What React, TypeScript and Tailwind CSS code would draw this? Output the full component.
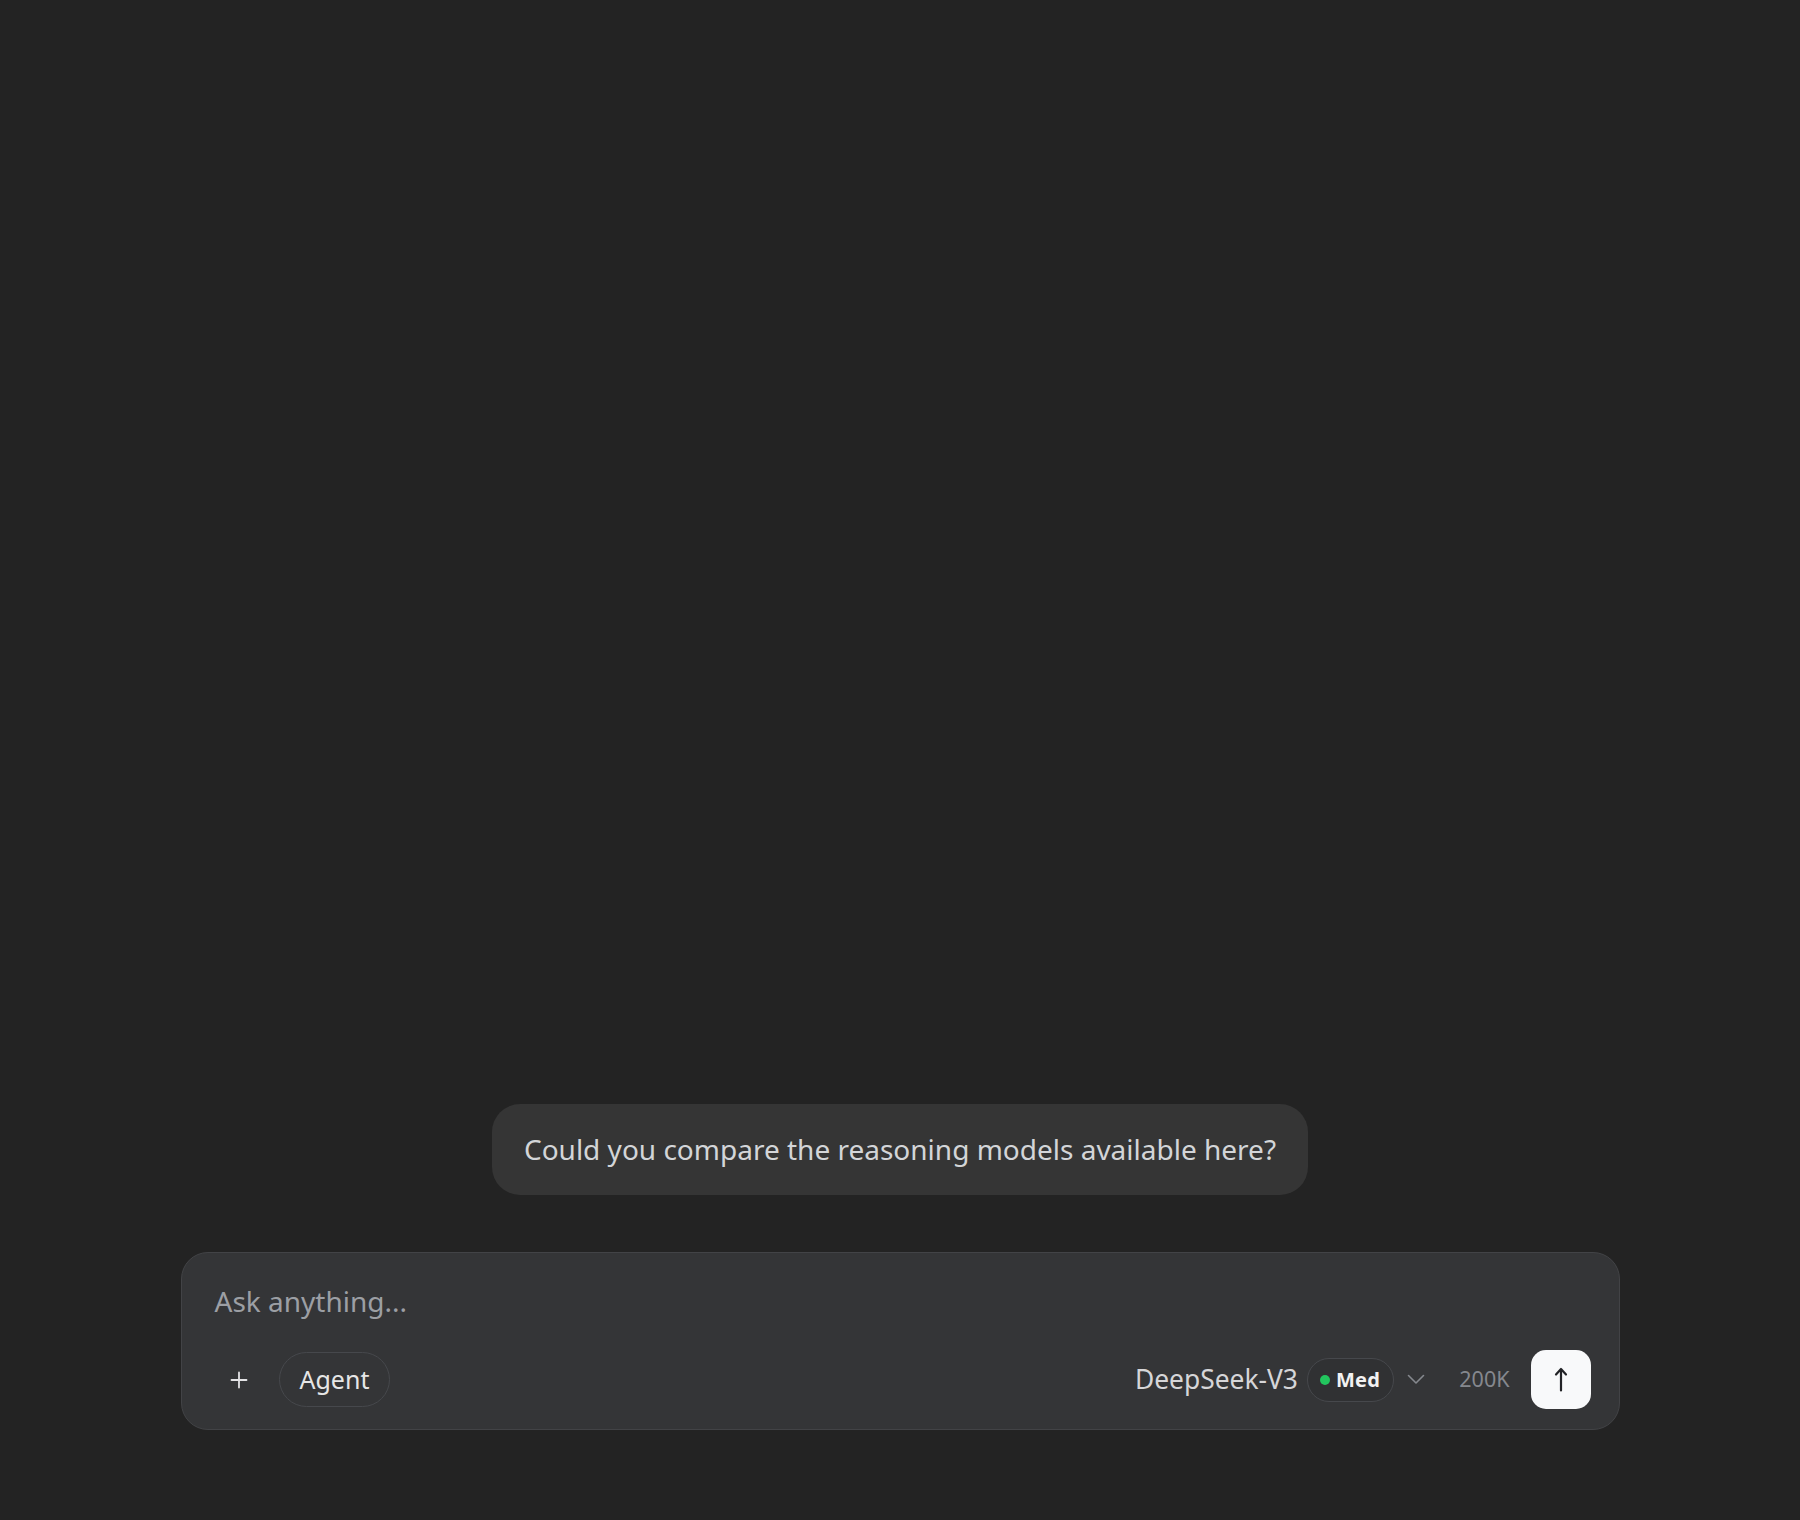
import React from "react";

const font = { fontFamily: '"Noto Sans", "Open Sans", sans-serif' };

const PlusIcon = () => (
  <svg width="18" height="18" viewBox="0 0 18 18" fill="none">
    <path d="M9 1.5v15M1.5 9h15" stroke="#e4e4e6" strokeWidth="1.8" strokeLinecap="round" />
  </svg>
);

const ChevronIcon = () => (
  <svg width="18" height="11" viewBox="0 0 18 11" fill="none">
    <path d="M1.5 1.5 9 9l7.5-7.5" stroke="#85888e" strokeWidth="1.6" strokeLinecap="round" strokeLinejoin="round" />
  </svg>
);

const ArrowUpIcon = () => (
  <svg width="14" height="25" viewBox="0 0 14 25" fill="none">
    <path d="M7 23.5V2M2 7.5 7 2l5 5.5" stroke="#222326" strokeWidth="2.2" strokeLinecap="round" strokeLinejoin="round" />
  </svg>
);

export default function App() {
  return (
    <div className="w-full h-[1520px] bg-[#232323] flex flex-col items-center" style={font}>
      <div className="flex-1" />
      {/* user message */}
      <div className="rounded-[28px] bg-[#353535] px-[32px] py-[26px] text-[28px] leading-[39px] text-[#d3d5d8]">
        Could you compare the reasoning models available here?
      </div>

      {/* composer */}
      <div className="mt-[57px] mb-[90px] w-[1439px] rounded-[27px] border border-[#424346] bg-[#343537] pl-[33px] pr-[28px] pt-[28px] pb-[20px]">
        <div className="text-[28px] leading-[40px] text-[#9c9fa4]">Ask anything...</div>
        <div className="mt-[29px] flex items-center h-[59px]">
          <button className="w-[48px] h-[48px] flex items-center justify-center">
            <PlusIcon />
          </button>
          <div className="ml-[16px] h-[55px] px-[20px] flex items-center rounded-full border border-[#46484c] text-[25px] text-[#e6e6e6]">
            Agent
          </div>
          <div className="flex-1" />
          <span className="text-[26.4px] text-[#d6d6d8]">DeepSeek-V3</span>
          <div className="ml-[9px] h-[44px] pl-[12px] pr-[13px] flex items-center gap-[6px] rounded-full border border-[#46484c] bg-[#303133]">
            <span className="w-[10px] h-[10px] rounded-full bg-[#22c55e]" />
            <span className="text-[20px] font-bold tracking-[0.3px] text-[#f2f2f2]">Med</span>
          </div>
          <div className="ml-[13px] flex items-center">
            <ChevronIcon />
          </div>
          <span className="ml-[34px] text-[21.5px] text-[#85888e]">200K</span>
          <button className="ml-[21px] w-[60px] h-[59px] rounded-[15px] bg-[#f8f9fa] flex items-center justify-center">
            <ArrowUpIcon />
          </button>
        </div>
      </div>
    </div>
  );
}
